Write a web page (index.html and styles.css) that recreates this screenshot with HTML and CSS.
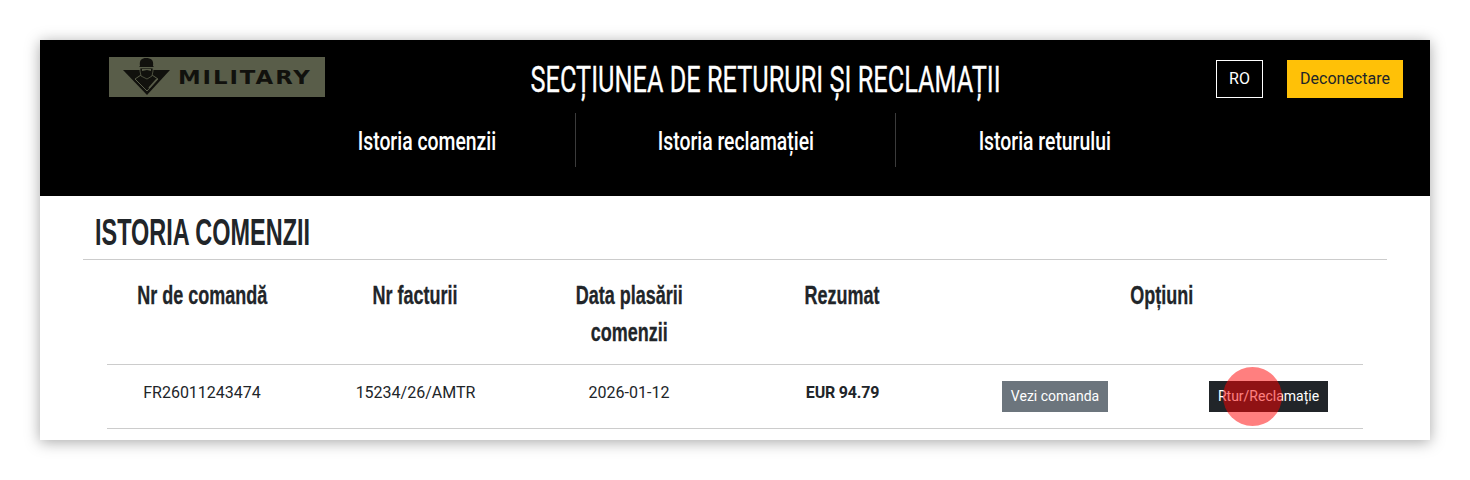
FILE: index.html
```html
<!DOCTYPE html>
<html lang="ro">
<head>
    <meta charset="UTF-8">
    <title>Secțiunea de retururi și reclamații</title>
    <link rel="stylesheet" href="styles.css">
</head>
<body>
    <div class="window">
        <header class="top">
            <div class="top-row">
                <a class="logo">
                    <svg class="logo-mark" width="50" height="40" viewBox="0 0 50 40">
                        <path d="M1 13H48L25 38Z" fill="#11110d"/>
                        <path d="M13 22L19 18H30L36 22L25 34Z" fill="#11110d" stroke="#595d49"/>
                        <path d="M18 9C17 3 20 1 24 1C29 1 32 3 31 9L32 10H17Z" fill="#11110d"/>
                        <path d="M18 11H31V14L30 19L25 22L19 19L18 14Z" fill="#11110d" stroke="#595d49" stroke-width="0.8"/>
                        <path d="M20 12H29V14L25 13L20 14Z" fill="#595d49"/>
                        <path d="M27 31L35 22" stroke="#595d49" stroke-width="1.5" fill="none"/>
                    </svg>
                    <span class="logo-text">MILITARY</span>
                </a>
                <h1 class="page-title"><span>SECȚIUNEA DE RETURURI ȘI RECLAMAȚII</span></h1>
                <div class="top-actions">
                    <button class="lang-btn">RO</button>
                    <button class="logout-btn">Deconectare</button>
                </div>
            </div>
            <nav class="tabs">
                <a class="tab"><span>Istoria comenzii</span></a>
                <a class="tab"><span>Istoria reclamației</span></a>
                <a class="tab"><span>Istoria returului</span></a>
            </nav>
        </header>

        <main class="content">
            <h2 class="section-title"><span>ISTORIA COMENZII</span></h2>
            <div class="orders">
                <div class="orders-row orders-head">
                    <div class="cell"><span>Nr de comandă</span></div>
                    <div class="cell"><span>Nr facturii</span></div>
                    <div class="cell"><span>Data plasării<br>comenzii</span></div>
                    <div class="cell"><span>Rezumat</span></div>
                    <div class="cell"><span>Opțiuni</span></div>
                </div>
                <div class="orders-row orders-item">
                    <div class="cell">FR26011243474</div>
                    <div class="cell">15234/26/AMTR</div>
                    <div class="cell">2026-01-12</div>
                    <div class="cell"><strong>EUR 94.79</strong></div>
                    <div class="cell options">
                        <button class="btn btn-grey">Vezi comanda</button>
                        <button class="btn btn-dark">Rtur/Reclamație<i class="click-dot"></i></button>
                    </div>
                </div>
            </div>
        </main>
    </div>
</body>
</html>
```
FILE: styles.css
```css
* {
    margin: 0;
    padding: 0;
    box-sizing: border-box;
}

body {
    background-color: #fff;
    color: #212529;
    font-family: Roboto, Arial, sans-serif;
    font-size: 16px;
    padding: 40px;
}

.window {
    height: 400px;
    overflow: hidden;
    background-color: #fff;
    box-shadow: 0 2px 14px rgba(0, 0, 0, 0.35);
}

.top {
    height: 156px;
    background-color: #000;
    color: #fff;
}

.top-row {
    display: flex;
    align-items: flex-start;
    height: 73px;
    padding: 17px 27px 0 69px;
}

.logo {
    display: flex;
    align-items: center;
    gap: 6px;
    width: 216px;
    height: 40px;
    padding-left: 13px;
    background-color: #595d49;
    flex-shrink: 0;
}

.logo-text {
    color: #11110d;
    font-family: "DejaVu Sans", sans-serif;
    font-size: 19px;
    font-weight: 700;
    letter-spacing: 1.6px;
    transform: scaleX(1.2);
    transform-origin: left center;
}

/* no condensed face installed, so the headings are squeezed */
.page-title {
    flex: 1;
    margin-right: 9px;
    text-align: center;
    font-size: 37px;
    font-weight: 400;
    line-height: 46px;
    white-space: nowrap;
    -webkit-text-stroke: 0.3px #fff;
}

.page-title span {
    display: inline-block;
    transform: scaleX(0.684);
}

.top-actions {
    display: flex;
    gap: 24px;
    margin-top: 3px;
}

.lang-btn {
    width: 47px;
    height: 38px;
    padding-bottom: 2px;
    background: none;
    border: 1px solid #fff;
    color: #fff;
    font: 16px Roboto, sans-serif;
}

.logout-btn {
    width: 116px;
    height: 38px;
    padding-bottom: 2px;
    background-color: #ffc107;
    border: none;
    color: #212529;
    font: 16px Roboto, sans-serif;
}

.tabs {
    display: flex;
    padding-left: 239px;
}

.tab {
    display: flex;
    align-items: center;
    justify-content: center;
    width: 297px;
    height: 54px;
    border-right: 1px solid #3b3b3b;
    font-size: 26px;
    font-weight: 500;
    padding-top: 1px;
    white-space: nowrap;
}

.tab:nth-child(2) {
    width: 320px;
}

.tab:last-child {
    border-right: none;
}

.tab span {
    display: inline-block;
    transform: scaleX(0.745);
}

.content {
    padding: 0 43px;
}

.section-title {
    height: 64px;
    border-bottom: 1px solid #ccc;
    padding: 14px 12px 0;
    font-family: "Liberation Sans", sans-serif;
    font-size: 37px;
    font-weight: 700;
    line-height: 46px;
    white-space: nowrap;
}

.section-title span {
    display: inline-block;
    transform: scaleX(0.634);
    transform-origin: left center;
}

.orders {
    padding: 0 24px;
}

.orders-row {
    display: grid;
    grid-template-columns: 190px 237px 190px 237px 1fr;
    border-bottom: 1px solid #ccc;
    text-align: center;
}

.orders-head {
    height: 105px;
    padding-top: 17px;
    font-family: "Liberation Sans", sans-serif;
    font-size: 25px;
    font-weight: 700;
    line-height: 37px;
    -webkit-text-stroke: 0.3px #212529;
}

.orders-head span {
    display: inline-block;
    transform: scaleX(0.72);
}

.orders-item {
    height: 64px;
    align-items: center;
    font-size: 16px;
    color: #212529;
    padding-bottom: 8px;
}

.orders-item strong {
    letter-spacing: -0.2px;
}

.options {
    display: flex;
    align-items: center;
    justify-content: space-between;
    padding: 0 35px 0 41px;
    margin-bottom: -8px;
}

.btn {
    position: relative;
    height: 31px;
    padding-bottom: 2px;
    border: none;
    color: #fff;
    font: 14px Roboto, sans-serif;
}

.btn-grey {
    width: 106px;
    background-color: #6c757d;
}

.btn-dark {
    width: 119px;
    background-color: #212529;
}

.click-dot {
    position: absolute;
    left: 14px;
    top: -14px;
    width: 59px;
    height: 59px;
    border-radius: 50%;
    background-color: rgba(255, 0, 0, 0.5);
}
```
